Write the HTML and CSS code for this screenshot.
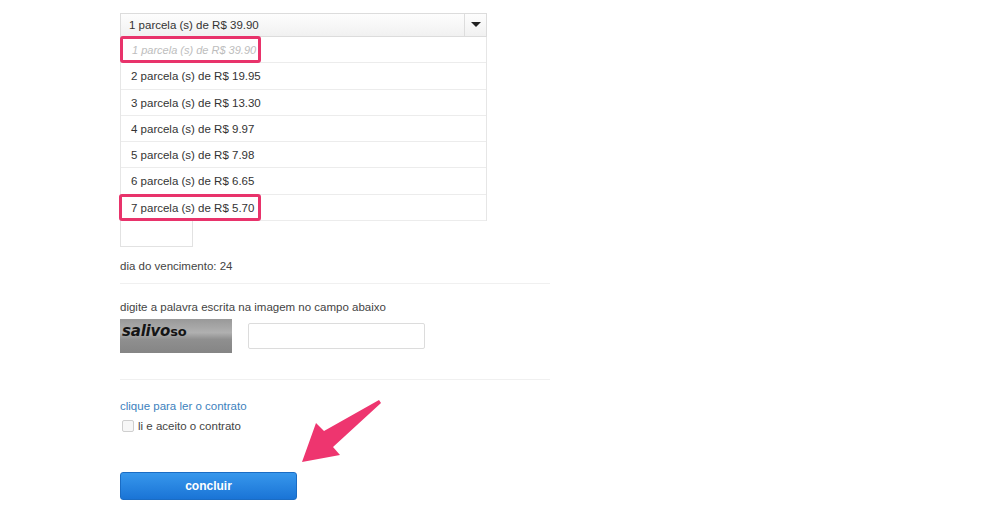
FILE: index.html
```html
<!DOCTYPE html>
<html lang="pt-BR">
<head>
  <meta charset="UTF-8" />
  <meta name="viewport" content="width=device-width, initial-scale=1" />
  <title>Pagamento</title>
  <link rel="stylesheet" href="styles.css">
</head>
<body>

  <div class="form">

    <!-- PARCELAS -->
    <div class="select">
      <span class="select-value">1 parcela (s) de R$ 39.90</span>
      <span class="select-arrow"></span>
    </div>

    <ul class="options">
      <li class="placeholder"><span class="mark"></span>1 parcela (s) de R$ 39.90</li>
      <li>2 parcela (s) de R$ 19.95</li>
      <li>3 parcela (s) de R$ 13.30</li>
      <li>4 parcela (s) de R$ 9.97</li>
      <li>5 parcela (s) de R$ 7.98</li>
      <li>6 parcela (s) de R$ 6.65</li>
      <li><span class="mark mark-wide"></span>7 parcela (s) de R$ 5.70</li>
    </ul>

    <div class="small-input"></div>

    <p class="due">dia do vencimento: 24</p>

    <hr>

    <!-- CAPTCHA -->
    <p class="hint">digite a palavra escrita na imagem no campo abaixo</p>
    <div class="captcha-row">
      <div class="captcha"><span class="captcha-word">salivo<b>so</b></span></div>
      <input class="captcha-input" type="text">
    </div>

    <hr>

    <a class="contract-link">clique para ler o contrato</a>
    <label class="agree"><span class="checkbox"></span>li e aceito o contrato</label>

    <button class="submit">concluir</button>

    <svg class="pointer" width="90" height="70" viewBox="0 0 90 70">
      <polygon points="3,63 17,24 25,32 80,1 82,4 34,48 41,56" fill="#ee356f" />
    </svg>
  </div>

</body>
</html>
```

FILE: styles.css
```css
* {
  box-sizing: border-box;
  margin: 0;
  padding: 0;
}

body {
  font-family: 'Liberation Sans', Arial, sans-serif;
  font-size: 11.5px;
  color: #444;
  background: #fff;
}

.form {
  position: relative;
  padding: 13px 0 0 120px;
  width: 560px;
}

.select {
  display: flex;
  width: 367px;
  height: 24px;
  border: 1px solid #dcdcdc;
  background: linear-gradient(#fdfdfd, #f1f1f1);
}

.select-value {
  flex: 1;
  padding-left: 8px;
  line-height: 22px;
  color: #333;
}

.select-arrow {
  width: 22px;
  border-left: 1px solid #ddd;
  position: relative;
}

.select-arrow::after {
  content: '';
  position: absolute;
  left: 6px;
  top: 8px;
  border-left: 5px solid transparent;
  border-right: 5px solid transparent;
  border-top: 5px solid #222;
}

.options {
  list-style: none;
  width: 367px;
  border-left: 1px solid #e6e6e6;
  border-right: 1px solid #e6e6e6;
  position: relative;
  z-index: 2;
  background: #fff;
}

.options li {
  position: relative;
  height: 26.3px;
  line-height: 26px;
  padding-left: 10px;
  border-bottom: 1px solid #ececec;
  color: #333;
}

.options li.placeholder {
  color: #bdbdbd;
  font-style: italic;
  font-size: 11px;
  padding-left: 11px;
}

.mark {
  position: absolute;
  left: -1px;
  top: -1px;
  width: 141px;
  height: 27px;
  border: 3px solid #e8336b;
  border-radius: 3px;
}

.mark-wide {
  left: -2px;
  width: 142px;
}

.small-input {
  width: 73px;
  height: 27px;
  margin-top: -1px;
  border: 1px solid #e2e2e2;
}

.due {
  margin-top: 13px;
}

hr {
  border: 0;
  border-top: 1px solid #f0f0f0;
  width: 430px;
  margin: 11px 0 17px;
}

.captcha-row {
  display: flex;
  align-items: center;
  gap: 16px;
  margin-top: 6px;
}

.captcha {
  width: 112px;
  height: 34px;
  background: linear-gradient(#999, #b0b0b0 40%, #8f8f8f 60%, #858585);
  padding: 3px 0 0 2px;
}

.captcha-word {
  font-family: 'DejaVu Sans', sans-serif;
  font-size: 15px;
  font-weight: bold;
  font-style: italic;
  color: #151515;
  letter-spacing: -0.2px;
}

.captcha-word b {
  font-size: 13px;
  font-style: normal;
}

.captcha-input {
  width: 177px;
  height: 26px;
  border: 1px solid #dcdcdc;
  border-radius: 2px;
}

.captcha-row + hr {
  margin-top: 26px;
  margin-bottom: 19px;
}

.contract-link {
  display: block;
  color: #3c7fbd;
  line-height: 14px;
}

.agree {
  display: flex;
  align-items: center;
  margin-top: 7px;
  color: #444;
}

.checkbox {
  width: 12px;
  height: 12px;
  margin: 0 4px 0 2px;
  border: 1px solid #cfcfcf;
  border-radius: 2px;
  background: #f7f7f7;
}

.submit {
  display: block;
  margin-top: 40px;
  width: 177px;
  height: 28px;
  border: 1px solid #1a6cc4;
  border-radius: 3px;
  background: linear-gradient(#3797ec, #1a74d6);
  color: #fff;
  font-family: 'Liberation Sans', Arial, sans-serif;
  font-size: 12px;
  font-weight: bold;
}

.pointer {
  position: absolute;
  left: 299px;
  top: 399px;
}
```
